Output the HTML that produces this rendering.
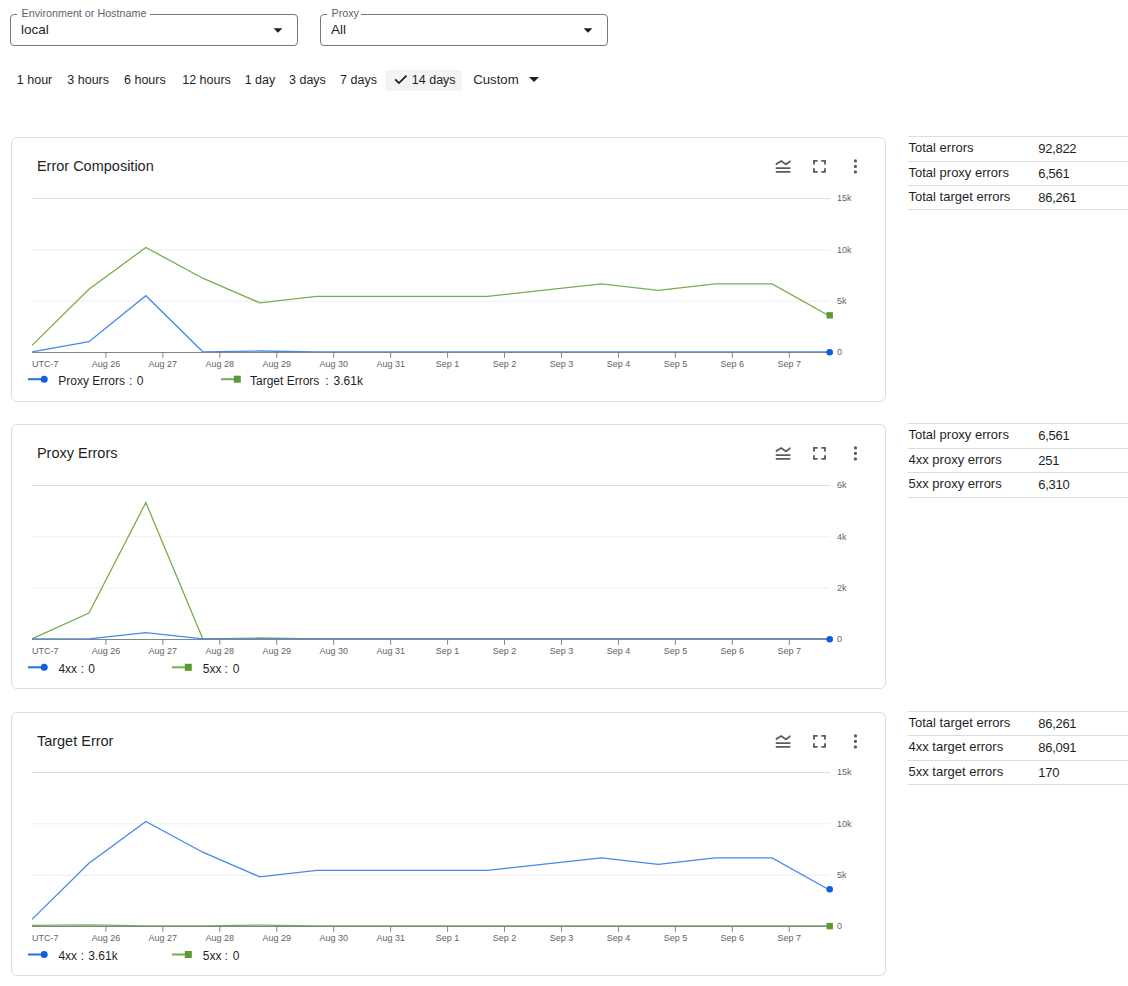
<!DOCTYPE html>
<html><head><meta charset="utf-8"><style>
html,body{margin:0;padding:0;background:#fff;}
body{width:1128px;height:986px;position:relative;overflow:hidden;font-family:"Liberation Sans", sans-serif;color:#1f1f1f;}
.a{position:absolute;white-space:nowrap;}
.sel{position:absolute;border:1px solid #747775;border-radius:4px;box-sizing:border-box;}
.card{position:absolute;left:11px;width:875px;border:1px solid #dadce0;border-radius:6px;box-sizing:border-box;}
.tl{position:absolute;left:908px;width:220px;height:1px;background:#dadce0;}
</style></head><body>

<div class="sel" style="left:10px;top:14px;width:288px;height:32px;"></div><div class="a" style="left:17px;top:10px;width:133px;height:8px;background:#fff;"></div><div class="a" style="left:21.5px;top:7.2px;font-size:10.75px;line-height:13px;color:#5f6368;">Environment or Hostname</div><div class="a" style="left:21px;top:22px;font-size:13.5px;line-height:16px;color:#1f1f1f;">local</div><svg class="a" style="left:273px;top:27.5px" width="10" height="5" viewBox="0 0 10 5"><path d="M0.6 0.3L5 4.7L9.4 0.3Z" fill="#1f1f1f"/></svg>
<div class="sel" style="left:320px;top:14px;width:288px;height:32px;"></div><div class="a" style="left:327px;top:10px;width:34px;height:8px;background:#fff;"></div><div class="a" style="left:331.5px;top:7.2px;font-size:10.75px;line-height:13px;color:#5f6368;">Proxy</div><div class="a" style="left:331px;top:22px;font-size:13.5px;line-height:16px;color:#1f1f1f;">All</div><svg class="a" style="left:583px;top:27.5px" width="10" height="5" viewBox="0 0 10 5"><path d="M0.6 0.3L5 4.7L9.4 0.3Z" fill="#1f1f1f"/></svg>
<div class="a" style="left:16.8px;top:73.2px;font-size:12.5px;line-height:15px;">1 hour</div>
<div class="a" style="left:67.3px;top:73.2px;font-size:12.5px;line-height:15px;">3 hours</div>
<div class="a" style="left:124.0px;top:73.2px;font-size:12.5px;line-height:15px;">6 hours</div>
<div class="a" style="left:182.2px;top:73.2px;font-size:12.5px;line-height:15px;">12 hours</div>
<div class="a" style="left:244.7px;top:73.2px;font-size:12.5px;line-height:15px;">1 day</div>
<div class="a" style="left:289.0px;top:73.2px;font-size:12.5px;line-height:15px;">3 days</div>
<div class="a" style="left:340.1px;top:73.2px;font-size:12.5px;line-height:15px;">7 days</div>
<div class="a" style="left:385px;top:70px;width:77px;height:21px;background:#f1f3f4;border-radius:4px;"></div>
<svg class="a" style="left:394px;top:75px" width="14" height="10" viewBox="0 0 14 10"><path d="M1.2 4.4L4.9 8.1L12.5 0.6" fill="none" stroke="#1f1f1f" stroke-width="1.8"/></svg>
<div class="a" style="left:411.8px;top:73.2px;font-size:12.5px;line-height:15px;">14 days</div>
<div class="a" style="left:473.2px;top:72.3px;font-size:13.2px;line-height:15px;">Custom</div>
<svg class="a" style="left:529px;top:77px" width="10" height="5" viewBox="0 0 10 5"><path d="M0 0L5 5L10 0Z" fill="#1f1f1f"/></svg>
<div class="card" style="top:137px;height:265px;"></div>
<div class="a" style="left:36.9px;top:158.0px;font-size:14.5px;line-height:17px;">Error Composition</div>
<svg class="a" style="left:772px;top:155px" width="24" height="24"><g transform="translate(0.10,0.35) scale(0.9167)"><path d="M20 15H4v-2h16v2zm0 2H4v2h16v-2zm-5-6l5-3.55V5l-5 3.55L10 5 4 8.66V11l5.92-3.61L15 11z" fill="#575b62"/></g></svg>
<svg class="a" style="left:808px;top:155px" width="24" height="24"><g transform="translate(0.45,0.35) scale(0.9167)"><path d="M7 14H5v5h5v-2H7v-3zm-2-4h2V7h3V5H5v5zm12 7h-3v2h5v-5h-2v3zM14 5v2h3v3h2V5h-5z" fill="#575b62"/></g></svg>
<svg class="a" style="left:844px;top:155px" width="24" height="24"><g transform="translate(0.45,0.35) scale(0.9167)"><path d="M12 7.8a1.75 1.75 0 1 0 0-3.5a1.75 1.75 0 1 0 0 3.5zm0 6a1.75 1.75 0 1 0 0-3.5a1.75 1.75 0 1 0 0 3.5zm0 6a1.75 1.75 0 1 0 0-3.5a1.75 1.75 0 1 0 0 3.5z" fill="#575b62"/></g></svg>
<svg class="a" style="left:0;top:180px" width="1128" height="230"><g transform="translate(0,-180)"><line x1="32" y1="198.5" x2="830" y2="198.5" stroke="#dadce0" stroke-width="1"/><line x1="32" y1="249.83" x2="830" y2="249.83" stroke="#eceef0" stroke-width="1"/><line x1="32" y1="301.17" x2="830" y2="301.17" stroke="#eceef0" stroke-width="1"/><polyline points="32.00,345.40 88.93,289.20 145.86,247.50 202.79,278.20 259.72,302.80 316.65,296.40 373.58,296.40 430.51,296.40 487.44,296.40 544.37,290.20 601.30,283.90 658.23,290.30 715.16,283.90 772.09,283.90 829.02,315.80" fill="none" stroke="#78ad4e" stroke-width="1.3" stroke-linejoin="miter"/><polyline points="32.00,351.80 88.93,341.70 145.86,295.70 202.79,351.80 259.72,351.00 316.65,351.80 373.58,351.80 430.51,351.80 487.44,351.80 544.37,351.80 601.30,351.80 658.23,351.80 715.16,351.80 772.09,351.80 829.02,351.80" fill="none" stroke="#4688ee" stroke-width="1.3" stroke-linejoin="miter"/><line x1="32" y1="352.5" x2="830" y2="352.5" stroke="#80868b" stroke-width="1"/><line x1="105.90" y1="352.0" x2="105.90" y2="357.8" stroke="#80868b" stroke-width="1"/><line x1="162.85" y1="352.0" x2="162.85" y2="357.8" stroke="#80868b" stroke-width="1"/><line x1="219.80" y1="352.0" x2="219.80" y2="357.8" stroke="#80868b" stroke-width="1"/><line x1="276.75" y1="352.0" x2="276.75" y2="357.8" stroke="#80868b" stroke-width="1"/><line x1="333.70" y1="352.0" x2="333.70" y2="357.8" stroke="#80868b" stroke-width="1"/><line x1="390.65" y1="352.0" x2="390.65" y2="357.8" stroke="#80868b" stroke-width="1"/><line x1="447.60" y1="352.0" x2="447.60" y2="357.8" stroke="#80868b" stroke-width="1"/><line x1="504.55" y1="352.0" x2="504.55" y2="357.8" stroke="#80868b" stroke-width="1"/><line x1="561.50" y1="352.0" x2="561.50" y2="357.8" stroke="#80868b" stroke-width="1"/><line x1="618.45" y1="352.0" x2="618.45" y2="357.8" stroke="#80868b" stroke-width="1"/><line x1="675.40" y1="352.0" x2="675.40" y2="357.8" stroke="#80868b" stroke-width="1"/><line x1="732.35" y1="352.0" x2="732.35" y2="357.8" stroke="#80868b" stroke-width="1"/><line x1="789.30" y1="352.0" x2="789.30" y2="357.8" stroke="#80868b" stroke-width="1"/><rect x="826.50" y="312.10" width="6.4" height="6.4" fill="#5b9a32"/><circle cx="829.7" cy="352.20" r="3.3" fill="#0b5fe0"/><text x="836.9" y="201.30" font-size="9" fill="#5f6368" font-family='"Liberation Sans"'>15k</text><text x="836.9" y="252.63" font-size="9" fill="#5f6368" font-family='"Liberation Sans"'>10k</text><text x="836.9" y="303.97" font-size="9" fill="#5f6368" font-family='"Liberation Sans"'>5k</text><text x="836.9" y="355.30" font-size="9" fill="#5f6368" font-family='"Liberation Sans"'>0</text><text x="32" y="366.8" font-size="9" fill="#5f6368" font-family='"Liberation Sans"'>UTC-7</text><text x="105.90" y="366.8" font-size="9" fill="#5f6368" text-anchor="middle" font-family='"Liberation Sans"'>Aug 26</text><text x="162.85" y="366.8" font-size="9" fill="#5f6368" text-anchor="middle" font-family='"Liberation Sans"'>Aug 27</text><text x="219.80" y="366.8" font-size="9" fill="#5f6368" text-anchor="middle" font-family='"Liberation Sans"'>Aug 28</text><text x="276.75" y="366.8" font-size="9" fill="#5f6368" text-anchor="middle" font-family='"Liberation Sans"'>Aug 29</text><text x="333.70" y="366.8" font-size="9" fill="#5f6368" text-anchor="middle" font-family='"Liberation Sans"'>Aug 30</text><text x="390.65" y="366.8" font-size="9" fill="#5f6368" text-anchor="middle" font-family='"Liberation Sans"'>Aug 31</text><text x="447.60" y="366.8" font-size="9" fill="#5f6368" text-anchor="middle" font-family='"Liberation Sans"'>Sep 1</text><text x="504.55" y="366.8" font-size="9" fill="#5f6368" text-anchor="middle" font-family='"Liberation Sans"'>Sep 2</text><text x="561.50" y="366.8" font-size="9" fill="#5f6368" text-anchor="middle" font-family='"Liberation Sans"'>Sep 3</text><text x="618.45" y="366.8" font-size="9" fill="#5f6368" text-anchor="middle" font-family='"Liberation Sans"'>Sep 4</text><text x="675.40" y="366.8" font-size="9" fill="#5f6368" text-anchor="middle" font-family='"Liberation Sans"'>Sep 5</text><text x="732.35" y="366.8" font-size="9" fill="#5f6368" text-anchor="middle" font-family='"Liberation Sans"'>Sep 6</text><text x="789.30" y="366.8" font-size="9" fill="#5f6368" text-anchor="middle" font-family='"Liberation Sans"'>Sep 7</text><line x1="28" y1="379.2" x2="42" y2="379.2" stroke="#1a73e8" stroke-width="2"/><circle cx="44.2" cy="379.2" r="3.5" fill="#0b5fe0"/><text x="58.3" y="384.50" font-size="12" fill="#1f1f1f" font-family='"Liberation Sans"'>Proxy Errors</text><text x="129.0" y="384.50" font-size="12" fill="#1f1f1f" font-family='"Liberation Sans"'>:</text><text x="136.7" y="384.50" font-size="12" fill="#1f1f1f" font-family='"Liberation Sans"'>0</text><line x1="221" y1="379.2" x2="234" y2="379.2" stroke="#78ad4e" stroke-width="2"/><rect x="233.8" y="375.70" width="7" height="7" fill="#5b9a32"/><text x="250.0" y="384.50" font-size="12" fill="#1f1f1f" font-family='"Liberation Sans"'>Target Errors</text><text x="325.3" y="384.50" font-size="12" fill="#1f1f1f" font-family='"Liberation Sans"'>:</text><text x="333.6" y="384.50" font-size="12" fill="#1f1f1f" font-family='"Liberation Sans"'>3.61k</text></g></svg>
<div class="tl" style="top:136px"></div>
<div class="tl" style="top:161px"></div>
<div class="tl" style="top:185px"></div>
<div class="tl" style="top:209px"></div>
<div class="a" style="left:908.5px;top:139.7px;font-size:13px;line-height:15px;">Total errors</div>
<div class="a" style="left:1038.3px;top:140.7px;font-size:13px;line-height:15px;letter-spacing:-0.3px;">92,822</div>
<div class="a" style="left:908.5px;top:164.7px;font-size:13px;line-height:15px;">Total proxy errors</div>
<div class="a" style="left:1038.3px;top:165.7px;font-size:13px;line-height:15px;letter-spacing:-0.3px;">6,561</div>
<div class="a" style="left:908.5px;top:188.7px;font-size:13px;line-height:15px;">Total target errors</div>
<div class="a" style="left:1038.3px;top:189.7px;font-size:13px;line-height:15px;letter-spacing:-0.3px;">86,261</div>
<div class="card" style="top:424px;height:265px;"></div>
<div class="a" style="left:36.9px;top:445.0px;font-size:14.5px;line-height:17px;">Proxy Errors</div>
<svg class="a" style="left:772px;top:442px" width="24" height="24"><g transform="translate(0.10,0.35) scale(0.9167)"><path d="M20 15H4v-2h16v2zm0 2H4v2h16v-2zm-5-6l5-3.55V5l-5 3.55L10 5 4 8.66V11l5.92-3.61L15 11z" fill="#575b62"/></g></svg>
<svg class="a" style="left:808px;top:442px" width="24" height="24"><g transform="translate(0.45,0.35) scale(0.9167)"><path d="M7 14H5v5h5v-2H7v-3zm-2-4h2V7h3V5H5v5zm12 7h-3v2h5v-5h-2v3zM14 5v2h3v3h2V5h-5z" fill="#575b62"/></g></svg>
<svg class="a" style="left:844px;top:442px" width="24" height="24"><g transform="translate(0.45,0.35) scale(0.9167)"><path d="M12 7.8a1.75 1.75 0 1 0 0-3.5a1.75 1.75 0 1 0 0 3.5zm0 6a1.75 1.75 0 1 0 0-3.5a1.75 1.75 0 1 0 0 3.5zm0 6a1.75 1.75 0 1 0 0-3.5a1.75 1.75 0 1 0 0 3.5z" fill="#575b62"/></g></svg>
<svg class="a" style="left:0;top:467px" width="1128" height="230"><g transform="translate(0,-180)"><line x1="32" y1="198.5" x2="830" y2="198.5" stroke="#dadce0" stroke-width="1"/><line x1="32" y1="249.83" x2="830" y2="249.83" stroke="#eceef0" stroke-width="1"/><line x1="32" y1="301.17" x2="830" y2="301.17" stroke="#eceef0" stroke-width="1"/><polyline points="32.00,351.80 88.93,326.10 145.86,215.50 202.79,351.80 259.72,351.00 316.65,351.80 373.58,351.80 430.51,351.80 487.44,351.80 544.37,351.80 601.30,351.80 658.23,351.80 715.16,351.80 772.09,351.80 829.02,351.80" fill="none" stroke="#78ad4e" stroke-width="1.3" stroke-linejoin="miter"/><polyline points="32.00,351.80 88.93,351.80 145.86,345.70 202.79,351.80 259.72,351.80 316.65,351.80 373.58,351.80 430.51,351.80 487.44,351.80 544.37,351.80 601.30,351.80 658.23,351.80 715.16,351.80 772.09,351.80 829.02,351.80" fill="none" stroke="#4688ee" stroke-width="1.3" stroke-linejoin="miter"/><line x1="32" y1="352.5" x2="830" y2="352.5" stroke="#80868b" stroke-width="1"/><line x1="105.90" y1="352.0" x2="105.90" y2="357.8" stroke="#80868b" stroke-width="1"/><line x1="162.85" y1="352.0" x2="162.85" y2="357.8" stroke="#80868b" stroke-width="1"/><line x1="219.80" y1="352.0" x2="219.80" y2="357.8" stroke="#80868b" stroke-width="1"/><line x1="276.75" y1="352.0" x2="276.75" y2="357.8" stroke="#80868b" stroke-width="1"/><line x1="333.70" y1="352.0" x2="333.70" y2="357.8" stroke="#80868b" stroke-width="1"/><line x1="390.65" y1="352.0" x2="390.65" y2="357.8" stroke="#80868b" stroke-width="1"/><line x1="447.60" y1="352.0" x2="447.60" y2="357.8" stroke="#80868b" stroke-width="1"/><line x1="504.55" y1="352.0" x2="504.55" y2="357.8" stroke="#80868b" stroke-width="1"/><line x1="561.50" y1="352.0" x2="561.50" y2="357.8" stroke="#80868b" stroke-width="1"/><line x1="618.45" y1="352.0" x2="618.45" y2="357.8" stroke="#80868b" stroke-width="1"/><line x1="675.40" y1="352.0" x2="675.40" y2="357.8" stroke="#80868b" stroke-width="1"/><line x1="732.35" y1="352.0" x2="732.35" y2="357.8" stroke="#80868b" stroke-width="1"/><line x1="789.30" y1="352.0" x2="789.30" y2="357.8" stroke="#80868b" stroke-width="1"/><circle cx="829.7" cy="352.20" r="3.3" fill="#0b5fe0"/><text x="836.9" y="201.30" font-size="9" fill="#5f6368" font-family='"Liberation Sans"'>6k</text><text x="836.9" y="252.63" font-size="9" fill="#5f6368" font-family='"Liberation Sans"'>4k</text><text x="836.9" y="303.97" font-size="9" fill="#5f6368" font-family='"Liberation Sans"'>2k</text><text x="836.9" y="355.30" font-size="9" fill="#5f6368" font-family='"Liberation Sans"'>0</text><text x="32" y="366.8" font-size="9" fill="#5f6368" font-family='"Liberation Sans"'>UTC-7</text><text x="105.90" y="366.8" font-size="9" fill="#5f6368" text-anchor="middle" font-family='"Liberation Sans"'>Aug 26</text><text x="162.85" y="366.8" font-size="9" fill="#5f6368" text-anchor="middle" font-family='"Liberation Sans"'>Aug 27</text><text x="219.80" y="366.8" font-size="9" fill="#5f6368" text-anchor="middle" font-family='"Liberation Sans"'>Aug 28</text><text x="276.75" y="366.8" font-size="9" fill="#5f6368" text-anchor="middle" font-family='"Liberation Sans"'>Aug 29</text><text x="333.70" y="366.8" font-size="9" fill="#5f6368" text-anchor="middle" font-family='"Liberation Sans"'>Aug 30</text><text x="390.65" y="366.8" font-size="9" fill="#5f6368" text-anchor="middle" font-family='"Liberation Sans"'>Aug 31</text><text x="447.60" y="366.8" font-size="9" fill="#5f6368" text-anchor="middle" font-family='"Liberation Sans"'>Sep 1</text><text x="504.55" y="366.8" font-size="9" fill="#5f6368" text-anchor="middle" font-family='"Liberation Sans"'>Sep 2</text><text x="561.50" y="366.8" font-size="9" fill="#5f6368" text-anchor="middle" font-family='"Liberation Sans"'>Sep 3</text><text x="618.45" y="366.8" font-size="9" fill="#5f6368" text-anchor="middle" font-family='"Liberation Sans"'>Sep 4</text><text x="675.40" y="366.8" font-size="9" fill="#5f6368" text-anchor="middle" font-family='"Liberation Sans"'>Sep 5</text><text x="732.35" y="366.8" font-size="9" fill="#5f6368" text-anchor="middle" font-family='"Liberation Sans"'>Sep 6</text><text x="789.30" y="366.8" font-size="9" fill="#5f6368" text-anchor="middle" font-family='"Liberation Sans"'>Sep 7</text><line x1="28" y1="380.29999999999995" x2="42" y2="380.29999999999995" stroke="#1a73e8" stroke-width="2"/><circle cx="44.2" cy="380.29999999999995" r="3.5" fill="#0b5fe0"/><text x="58.4" y="385.60" font-size="12" fill="#1f1f1f" font-family='"Liberation Sans"'>4xx</text><text x="80.7" y="385.60" font-size="12" fill="#1f1f1f" font-family='"Liberation Sans"'>:</text><text x="88.3" y="385.60" font-size="12" fill="#1f1f1f" font-family='"Liberation Sans"'>0</text><line x1="172" y1="380.29999999999995" x2="185" y2="380.29999999999995" stroke="#78ad4e" stroke-width="2"/><rect x="184.8" y="376.80" width="7" height="7" fill="#5b9a32"/><text x="202.8" y="385.60" font-size="12" fill="#1f1f1f" font-family='"Liberation Sans"'>5xx</text><text x="224.6" y="385.60" font-size="12" fill="#1f1f1f" font-family='"Liberation Sans"'>:</text><text x="232.8" y="385.60" font-size="12" fill="#1f1f1f" font-family='"Liberation Sans"'>0</text></g></svg>
<div class="tl" style="top:423px"></div>
<div class="tl" style="top:448px"></div>
<div class="tl" style="top:472px"></div>
<div class="tl" style="top:497px"></div>
<div class="a" style="left:908.5px;top:426.7px;font-size:13px;line-height:15px;">Total proxy errors</div>
<div class="a" style="left:1038.3px;top:427.7px;font-size:13px;line-height:15px;letter-spacing:-0.3px;">6,561</div>
<div class="a" style="left:908.5px;top:451.7px;font-size:13px;line-height:15px;">4xx proxy errors</div>
<div class="a" style="left:1038.3px;top:452.7px;font-size:13px;line-height:15px;letter-spacing:-0.3px;">251</div>
<div class="a" style="left:908.5px;top:475.7px;font-size:13px;line-height:15px;">5xx proxy errors</div>
<div class="a" style="left:1038.3px;top:476.7px;font-size:13px;line-height:15px;letter-spacing:-0.3px;">6,310</div>
<div class="card" style="top:712px;height:264px;"></div>
<div class="a" style="left:36.9px;top:733.0px;font-size:14.5px;line-height:17px;">Target Error</div>
<svg class="a" style="left:772px;top:730px" width="24" height="24"><g transform="translate(0.10,0.35) scale(0.9167)"><path d="M20 15H4v-2h16v2zm0 2H4v2h16v-2zm-5-6l5-3.55V5l-5 3.55L10 5 4 8.66V11l5.92-3.61L15 11z" fill="#575b62"/></g></svg>
<svg class="a" style="left:808px;top:730px" width="24" height="24"><g transform="translate(0.45,0.35) scale(0.9167)"><path d="M7 14H5v5h5v-2H7v-3zm-2-4h2V7h3V5H5v5zm12 7h-3v2h5v-5h-2v3zM14 5v2h3v3h2V5h-5z" fill="#575b62"/></g></svg>
<svg class="a" style="left:844px;top:730px" width="24" height="24"><g transform="translate(0.45,0.35) scale(0.9167)"><path d="M12 7.8a1.75 1.75 0 1 0 0-3.5a1.75 1.75 0 1 0 0 3.5zm0 6a1.75 1.75 0 1 0 0-3.5a1.75 1.75 0 1 0 0 3.5zm0 6a1.75 1.75 0 1 0 0-3.5a1.75 1.75 0 1 0 0 3.5z" fill="#575b62"/></g></svg>
<svg class="a" style="left:0;top:754px" width="1128" height="230"><g transform="translate(0,-180)"><line x1="32" y1="198.5" x2="830" y2="198.5" stroke="#dadce0" stroke-width="1"/><line x1="32" y1="249.83" x2="830" y2="249.83" stroke="#eceef0" stroke-width="1"/><line x1="32" y1="301.17" x2="830" y2="301.17" stroke="#eceef0" stroke-width="1"/><polyline points="32.00,345.40 88.93,289.20 145.86,247.50 202.79,278.20 259.72,302.80 316.65,296.40 373.58,296.40 430.51,296.40 487.44,296.40 544.37,290.20 601.30,283.90 658.23,290.30 715.16,283.90 772.09,283.90 829.02,315.80" fill="none" stroke="#4688ee" stroke-width="1.3" stroke-linejoin="miter"/><polyline points="32.00,351.30 88.93,350.90 145.86,351.80 202.79,351.80 259.72,351.10 316.65,351.80 373.58,351.80 430.51,351.80 487.44,351.80 544.37,351.80 601.30,351.80 658.23,351.80 715.16,351.80 772.09,351.80 829.02,351.80" fill="none" stroke="#78ad4e" stroke-width="1.3" stroke-linejoin="miter"/><line x1="32" y1="352.5" x2="830" y2="352.5" stroke="#80868b" stroke-width="1"/><line x1="105.90" y1="352.0" x2="105.90" y2="357.8" stroke="#80868b" stroke-width="1"/><line x1="162.85" y1="352.0" x2="162.85" y2="357.8" stroke="#80868b" stroke-width="1"/><line x1="219.80" y1="352.0" x2="219.80" y2="357.8" stroke="#80868b" stroke-width="1"/><line x1="276.75" y1="352.0" x2="276.75" y2="357.8" stroke="#80868b" stroke-width="1"/><line x1="333.70" y1="352.0" x2="333.70" y2="357.8" stroke="#80868b" stroke-width="1"/><line x1="390.65" y1="352.0" x2="390.65" y2="357.8" stroke="#80868b" stroke-width="1"/><line x1="447.60" y1="352.0" x2="447.60" y2="357.8" stroke="#80868b" stroke-width="1"/><line x1="504.55" y1="352.0" x2="504.55" y2="357.8" stroke="#80868b" stroke-width="1"/><line x1="561.50" y1="352.0" x2="561.50" y2="357.8" stroke="#80868b" stroke-width="1"/><line x1="618.45" y1="352.0" x2="618.45" y2="357.8" stroke="#80868b" stroke-width="1"/><line x1="675.40" y1="352.0" x2="675.40" y2="357.8" stroke="#80868b" stroke-width="1"/><line x1="732.35" y1="352.0" x2="732.35" y2="357.8" stroke="#80868b" stroke-width="1"/><line x1="789.30" y1="352.0" x2="789.30" y2="357.8" stroke="#80868b" stroke-width="1"/><circle cx="829.7" cy="315.20" r="3.3" fill="#0b5fe0"/><rect x="826.50" y="348.90" width="6.4" height="6.4" fill="#5b9a32"/><text x="836.9" y="201.30" font-size="9" fill="#5f6368" font-family='"Liberation Sans"'>15k</text><text x="836.9" y="252.63" font-size="9" fill="#5f6368" font-family='"Liberation Sans"'>10k</text><text x="836.9" y="303.97" font-size="9" fill="#5f6368" font-family='"Liberation Sans"'>5k</text><text x="836.9" y="355.30" font-size="9" fill="#5f6368" font-family='"Liberation Sans"'>0</text><text x="32" y="366.8" font-size="9" fill="#5f6368" font-family='"Liberation Sans"'>UTC-7</text><text x="105.90" y="366.8" font-size="9" fill="#5f6368" text-anchor="middle" font-family='"Liberation Sans"'>Aug 26</text><text x="162.85" y="366.8" font-size="9" fill="#5f6368" text-anchor="middle" font-family='"Liberation Sans"'>Aug 27</text><text x="219.80" y="366.8" font-size="9" fill="#5f6368" text-anchor="middle" font-family='"Liberation Sans"'>Aug 28</text><text x="276.75" y="366.8" font-size="9" fill="#5f6368" text-anchor="middle" font-family='"Liberation Sans"'>Aug 29</text><text x="333.70" y="366.8" font-size="9" fill="#5f6368" text-anchor="middle" font-family='"Liberation Sans"'>Aug 30</text><text x="390.65" y="366.8" font-size="9" fill="#5f6368" text-anchor="middle" font-family='"Liberation Sans"'>Aug 31</text><text x="447.60" y="366.8" font-size="9" fill="#5f6368" text-anchor="middle" font-family='"Liberation Sans"'>Sep 1</text><text x="504.55" y="366.8" font-size="9" fill="#5f6368" text-anchor="middle" font-family='"Liberation Sans"'>Sep 2</text><text x="561.50" y="366.8" font-size="9" fill="#5f6368" text-anchor="middle" font-family='"Liberation Sans"'>Sep 3</text><text x="618.45" y="366.8" font-size="9" fill="#5f6368" text-anchor="middle" font-family='"Liberation Sans"'>Sep 4</text><text x="675.40" y="366.8" font-size="9" fill="#5f6368" text-anchor="middle" font-family='"Liberation Sans"'>Sep 5</text><text x="732.35" y="366.8" font-size="9" fill="#5f6368" text-anchor="middle" font-family='"Liberation Sans"'>Sep 6</text><text x="789.30" y="366.8" font-size="9" fill="#5f6368" text-anchor="middle" font-family='"Liberation Sans"'>Sep 7</text><line x1="28" y1="380.5" x2="42" y2="380.5" stroke="#1a73e8" stroke-width="2"/><circle cx="44.2" cy="380.5" r="3.5" fill="#0b5fe0"/><text x="58.4" y="385.80" font-size="12" fill="#1f1f1f" font-family='"Liberation Sans"'>4xx</text><text x="80.7" y="385.80" font-size="12" fill="#1f1f1f" font-family='"Liberation Sans"'>:</text><text x="88.3" y="385.80" font-size="12" fill="#1f1f1f" font-family='"Liberation Sans"'>3.61k</text><line x1="172" y1="380.5" x2="185" y2="380.5" stroke="#78ad4e" stroke-width="2"/><rect x="184.8" y="377.00" width="7" height="7" fill="#5b9a32"/><text x="202.8" y="385.80" font-size="12" fill="#1f1f1f" font-family='"Liberation Sans"'>5xx</text><text x="224.6" y="385.80" font-size="12" fill="#1f1f1f" font-family='"Liberation Sans"'>:</text><text x="232.8" y="385.80" font-size="12" fill="#1f1f1f" font-family='"Liberation Sans"'>0</text></g></svg>
<div class="tl" style="top:711px"></div>
<div class="tl" style="top:735px"></div>
<div class="tl" style="top:760px"></div>
<div class="tl" style="top:784px"></div>
<div class="a" style="left:908.5px;top:714.7px;font-size:13px;line-height:15px;">Total target errors</div>
<div class="a" style="left:1038.3px;top:715.7px;font-size:13px;line-height:15px;letter-spacing:-0.3px;">86,261</div>
<div class="a" style="left:908.5px;top:738.7px;font-size:13px;line-height:15px;">4xx target errors</div>
<div class="a" style="left:1038.3px;top:739.7px;font-size:13px;line-height:15px;letter-spacing:-0.3px;">86,091</div>
<div class="a" style="left:908.5px;top:763.7px;font-size:13px;line-height:15px;">5xx target errors</div>
<div class="a" style="left:1038.3px;top:764.7px;font-size:13px;line-height:15px;letter-spacing:-0.3px;">170</div>
</body></html>
